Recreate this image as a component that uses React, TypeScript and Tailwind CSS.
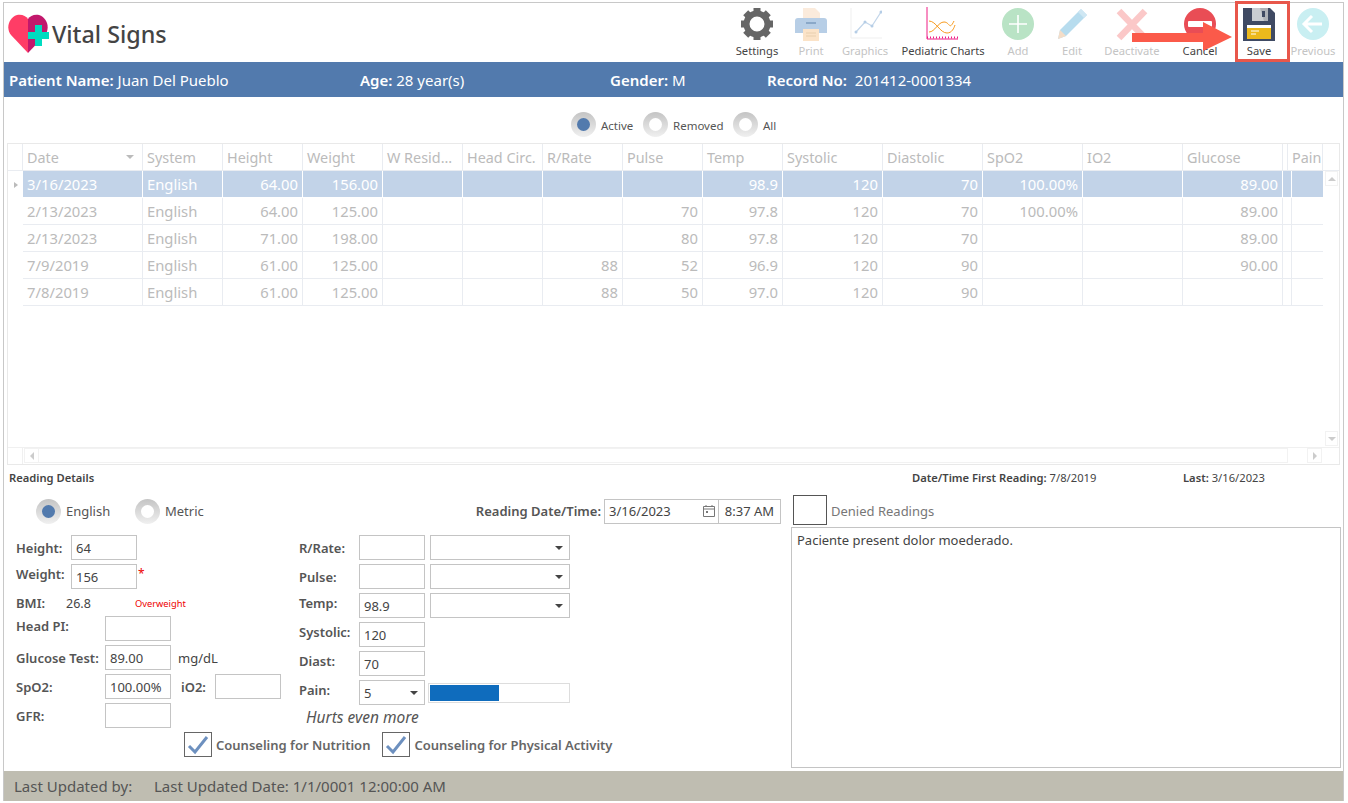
const COLS = 'grid grid-cols-[120px_80px_80px_80px_80px_80px_80px_80px_80px_100px_100px_100px_100px_100px_5px_35px]';

const HEADERS = ['Date', 'System', 'Height', 'Weight', 'W Resid...', 'Head Circ.', 'R/Rate', 'Pulse', 'Temp', 'Systolic', 'Diastolic', 'SpO2', 'IO2', 'Glucose', '', 'Pain'];

const ROWS = [
  ['3/16/2023', 'English', '64.00', '156.00', '', '', '', '', '98.9', '120', '70', '100.00%', '', '89.00', '', ''],
  ['2/13/2023', 'English', '64.00', '125.00', '', '', '', '70', '97.8', '120', '70', '100.00%', '', '89.00', '', ''],
  ['2/13/2023', 'English', '71.00', '198.00', '', '', '', '80', '97.8', '120', '70', '', '', '89.00', '', ''],
  ['7/9/2019', 'English', '61.00', '125.00', '', '', '88', '52', '96.9', '120', '90', '', '', '90.00', '', ''],
  ['7/8/2019', 'English', '61.00', '125.00', '', '', '88', '50', '97.0', '120', '90', '', '', '', '', ''],
];

function Gear() {
  return (
    <svg width="34" height="34" viewBox="0 0 34 34">
      {[0, 45, 90, 135, 180, 225, 270, 315].map((a) => (
        <rect key={a} x="13.5" y="1" width="7" height="8" fill="#666" transform={`rotate(${a} 17 17)`} />
      ))}
      <circle cx="17" cy="17" r="10.5" fill="none" stroke="#666" strokeWidth="6" />
    </svg>
  );
}

function Printer() {
  return (
    <svg width="34" height="34" viewBox="0 0 34 34">
      <path d="M9 1h12l5 5v8H9z" fill="#fbebdc" />
      <path d="M4 11h26a3 3 0 0 1 3 3v12H1V14a3 3 0 0 1 3-3z" fill="#b7cee6" />
      <rect x="12" y="15" width="10" height="2" fill="#8aa8c8" />
      <rect x="9" y="22" width="16" height="12" fill="#fbe3c8" />
      <path d="M12 26h10M12 29h10" stroke="#e8cfae" strokeWidth="1" />
    </svg>
  );
}

function Graphics() {
  return (
    <svg width="34" height="34" viewBox="0 0 34 34">
      <path d="M3 1v30h31" fill="none" stroke="#efefef" strokeWidth="1" />
      <path d="M8 25l9-10 7 4 9-14" fill="none" stroke="#c3d6ea" strokeWidth="1.3" />
      <circle cx="8" cy="25" r="1.5" fill="#b5cde6" />
      <circle cx="17" cy="15" r="1.5" fill="#b5cde6" />
      <circle cx="24" cy="19" r="1.5" fill="#b5cde6" />
      <circle cx="33" cy="5" r="1.5" fill="#b5cde6" />
    </svg>
  );
}

function PediatricIcon() {
  return (
    <svg width="34" height="34" viewBox="0 0 34 34">
      <path d="M1 0v32h31" fill="none" stroke="#ee1c84" strokeWidth="1" />
      <path d="M1 30.5h31" fill="none" stroke="#ee1c84" strokeWidth="2" strokeDasharray="1 2" />
      <path d="M3 14c7 0 11 12 18 12 5 0 7-5 8-8" fill="none" stroke="#f89a1c" strokeWidth="1" />
      <path d="M3 25c6 0 9-10 15-10 6 0 5 9 10-1" fill="none" stroke="#f89a1c" strokeWidth="1" />
    </svg>
  );
}

function AddIcon() {
  return (
    <svg width="34" height="34" viewBox="0 0 34 34">
      <circle cx="17" cy="17" r="16" fill="#b9e3c5" />
      <path d="M17 8v18M8 17h18" stroke="#fff" strokeWidth="1.6" />
    </svg>
  );
}

function EditIcon() {
  return (
    <svg width="34" height="34" viewBox="0 0 34 34">
      <path d="M26 2l6 6L11 29 3 32l2-9z" fill="#b7dcee" />
      <path d="M5 23l6 6-8 3z" fill="#f4ddc8" />
      <path d="M26 2l6 6-3 3-6-6z" fill="#cfe7f3" />
    </svg>
  );
}

function DeactivateIcon() {
  return (
    <svg width="34" height="34" viewBox="0 0 34 34">
      <path d="M4 4l26 27M30 4L4 31" stroke="#fbc8c8" strokeWidth="6.5" />
    </svg>
  );
}

function CancelIcon() {
  return (
    <svg width="34" height="34" viewBox="0 0 34 34">
      <circle cx="17" cy="17" r="16" fill="#e94d55" />
      <rect x="5" y="14" width="24" height="6" rx="1" fill="#fff" />
    </svg>
  );
}

function SaveIcon() {
  return (
    <svg width="34" height="34" viewBox="0 0 34 34">
      <path d="M1 1h27l5 5v28H1z" fill="#3f4a63" />
      <path d="M10 1h16v13H10z" fill="#c9cdd2" />
      <path d="M18 1h8v13h-4z" fill="#aeb2b8" />
      <rect x="20" y="4" width="3" height="6" fill="#3f4a63" />
      <rect x="5" y="18" width="24" height="3" fill="#fff" />
      <rect x="5" y="21" width="24" height="11" fill="#ecb91c" />
      <path d="M9 24h8M9 27h5" stroke="#fff" strokeWidth="1" />
    </svg>
  );
}

function PreviousIcon() {
  return (
    <svg width="34" height="34" viewBox="0 0 34 34">
      <circle cx="17" cy="17" r="16" fill="#c9eff2" />
      <path d="M26 17H9M16 9l-8 8 8 8" fill="none" stroke="#fff" strokeWidth="3" />
    </svg>
  );
}

const TOOLS = [
  { label: 'Settings', w: 'w-[58px]', on: true, icon: <Gear /> },
  { label: 'Print', w: 'w-[50px]', on: false, icon: <Printer /> },
  { label: 'Graphics', w: 'w-[58px]', on: false, icon: <Graphics /> },
  { label: 'Pediatric Charts', w: 'w-[98px]', on: true, icon: <PediatricIcon /> },
  { label: 'Add', w: 'w-[52px]', on: false, icon: <AddIcon /> },
  { label: 'Edit', w: 'w-[56px]', on: false, icon: <EditIcon /> },
  { label: 'Deactivate', w: 'w-[64px]', on: false, icon: <DeactivateIcon /> },
  { label: 'Cancel', w: 'w-[72px]', on: true, icon: <CancelIcon /> },
  { label: 'Save', w: 'w-[46px]', on: true, icon: <SaveIcon /> },
  { label: 'Previous', w: 'w-[62px]', on: false, icon: <PreviousIcon /> },
];

function Logo() {
  return (
    <svg width="41" height="40" viewBox="0 0 41 40" className="shrink-0">
      <path d="M20 39L3 21C-2 15 0 4 9 1c5-1 9 1 11 4z" fill="#ff3d66" />
      <path d="M20 39l17-18c5-6 3-17-6-20-5-1-9 1-11 4z" fill="#c2186c" />
      <path d="M27 11h7v7h7v7h-7v7h-7v-7h-7v-7h7z" fill="#00dcc0" />
    </svg>
  );
}

function Radio({ checked, label, labelClass }: { checked?: boolean; label: string; labelClass: string }) {
  return (
    <div className="flex items-center gap-[5px]">
      <div className="flex h-[25px] w-[25px] items-center justify-center rounded-full bg-gradient-to-b from-[#c4c4c4] to-[#f0f0f0]">
        <div className={`h-[13px] w-[13px] rounded-full ${checked ? 'bg-[#527aad]' : 'bg-white'}`} />
      </div>
      <span className={`${labelClass} pt-[2px] text-[#555]`}>{label}</span>
    </div>
  );
}

function Box({ value, className = 'w-[66px]' }: { value?: string; className?: string }) {
  return (
    <div className={`flex h-[25px] shrink-0 items-center border border-[#c4c4c4] pl-[4px] pt-[2px] text-[13px] text-[#444] ${className}`}>
      {value}
    </div>
  );
}

function Caret() {
  return <div className="h-0 w-0 border-x-[4px] border-t-[4px] border-x-transparent border-t-[#444]" />;
}

function Select({ value, className = 'w-[140px]' }: { value?: string; className?: string }) {
  return (
    <div className={`flex h-[25px] shrink-0 items-center justify-between border border-[#c4c4c4] pl-[4px] pr-[6px] text-[13px] text-[#444] ${className}`}>
      <span className="pt-[2px]">{value}</span>
      <Caret />
    </div>
  );
}

function Label({ children, className }: { children: string; className: string }) {
  return <span className={`shrink-0 translate-y-[1px] text-[13px] font-semibold text-[#555] ${className}`}>{children}</span>;
}

function Check({ label }: { label: string }) {
  return (
    <div className="flex items-center gap-[4px]">
      <div className="flex h-[25px] w-[28px] items-center justify-center border border-[#666]">
        <svg width="22" height="20" viewBox="0 0 22 20">
          <path d="M2 11l6 6L20 2" fill="none" stroke="#6d90bf" strokeWidth="3" />
        </svg>
      </div>
      <span className="pt-[3px] text-[13px] font-semibold text-[#666]">{label}</span>
    </div>
  );
}

function VitalsGrid() {
  return (
    <div className="mx-[3px] flex h-[322px] flex-col border border-[#e9e9e9]">
      <div className="flex h-[27px] shrink-0 border-b border-[#e9ecf1] text-[14.4px] text-[#bbb]">
        <div className="w-[15px] shrink-0 border-r border-[#e9ecf1]" />
        <div className={COLS}>
          {HEADERS.map((h, i) => (
            <div key={i} className="relative flex items-center overflow-hidden whitespace-nowrap border-r border-[#e9ecf1] pl-[4px] pt-[2px]">
              {h}
              {i === 0 && (
                <div className="absolute right-[8px] top-[11px] h-0 w-0 border-x-[4px] border-t-[4px] border-x-transparent border-t-[#bbb]" />
              )}
            </div>
          ))}
        </div>
      </div>
      <div className="flex min-h-0 flex-1 text-[14.8px]">
        <div className="flex w-[15px] shrink-0 flex-col">
          <div className="flex h-[27px] items-center justify-center">
            <div className="h-0 w-0 border-y-[3.5px] border-l-[4px] border-y-transparent border-l-[#bbb]" />
          </div>
        </div>
        <div>
          {ROWS.map((row, r) => (
            <div key={r} className={`${COLS} h-[27px] ${r === 0 ? 'bg-[#c2d3e8] text-white' : 'text-[#bbb]'}`}>
              {row.map((c, i) => (
                <div
                  key={i}
                  className={`flex items-center overflow-hidden pl-[4px] ${i < 15 ? 'border-r' : ''} ${i > 1 ? 'justify-end pr-[4px]' : ''} ${r === 0 ? 'border-b border-r-white border-b-white' : 'border-b border-[#e9ecf1]'}`}
                >
                  {c}
                </div>
              ))}
            </div>
          ))}
        </div>
        <div className="ml-[1px] flex flex-1 flex-col justify-between px-[1px] pb-[1px]">
          <div className="flex h-[15px] items-center justify-center border border-[#f2f2f2]">
            <div className="h-0 w-0 border-x-[4px] border-b-[4px] border-x-transparent border-b-[#ccc]" />
          </div>
          <div className="flex h-[15px] items-center justify-center border border-[#f2f2f2]">
            <div className="h-0 w-0 border-x-[4px] border-t-[4px] border-x-transparent border-t-[#ccc]" />
          </div>
        </div>
      </div>
      <div className="flex h-[17px] shrink-0 border-t border-[#f0f0f0]">
        <div className="w-[15px] shrink-0 border-r border-[#f0f0f0]" />
        <div className="ml-[1px] flex h-[15px] w-[1264px] items-center border border-[#f2f2f2]">
          <div className="flex h-full w-[14px] items-center justify-center border-r border-[#f2f2f2]">
            <div className="h-0 w-0 border-y-[4px] border-r-[4px] border-y-transparent border-r-[#ccc]" />
          </div>
        </div>
        <div className="ml-[19px] flex h-[15px] w-[15px] items-center justify-center border border-[#f2f2f2]">
          <div className="h-0 w-0 border-y-[4px] border-l-[4px] border-y-transparent border-l-[#ccc]" />
        </div>
      </div>
    </div>
  );
}

function LeftFields() {
  return (
    <div className="flex w-[295px] shrink-0 flex-col pl-[12px]">
      <div className="flex h-[25px] items-center">
        <Label className="w-[55px]">Height:</Label>
        <Box value="64" />
      </div>
      <div className="mt-[4px] flex h-[25px] items-start">
        <Label className="w-[55px]">Weight:</Label>
        <Box value="156" />
        <span className="ml-[1px] mt-[1px] text-[12px] text-[#e00]">*</span>
      </div>
      <div className="flex h-[27px] items-center pt-[3px]">
        <span className="w-[50px] text-[13px] font-semibold text-[#555]">BMI:</span>
        <span className="w-[69px] text-[12.5px] text-[#444]">26.8</span>
        <span className="text-[9.3px] text-[#e00]">Overweight</span>
      </div>
      <div className="flex h-[25px] items-start">
        <Label className="w-[89px]">Head PI:</Label>
        <Box />
      </div>
      <div className="mt-[4px] flex h-[25px] items-center">
        <Label className="w-[89px]">Glucose Test:</Label>
        <Box value="89.00" />
        <span className="ml-[7px] pt-[2px] text-[13px] text-[#444]">mg/dL</span>
      </div>
      <div className="mt-[4px] flex h-[25px] items-center">
        <Label className="w-[89px]">SpO2:</Label>
        <Box value="100.00%" />
        <Label className="ml-[10px] w-[34px]">iO2:</Label>
        <Box />
      </div>
      <div className="mt-[4px] flex h-[25px] items-center">
        <Label className="w-[89px]">GFR:</Label>
        <Box />
      </div>
    </div>
  );
}

function MiddleFields() {
  return (
    <div className="flex flex-col gap-[4px]">
      {['R/Rate:', 'Pulse:'].map((l) => (
        <div key={l} className="flex h-[25px] items-center">
          <Label className="w-[60px]">{l}</Label>
          <Box />
          <Select className="ml-[5px] w-[140px]" />
        </div>
      ))}
      <div className="flex h-[25px] items-start">
        <Label className="w-[60px]">Temp:</Label>
        <Box value="98.9" />
        <Select className="ml-[5px] w-[140px]" />
      </div>
      <div className="flex h-[25px] items-start">
        <Label className="w-[60px]">Systolic:</Label>
        <Box value="120" />
      </div>
      <div className="flex h-[25px] items-start">
        <Label className="w-[60px]">Diast:</Label>
        <Box value="70" />
      </div>
      <div className="flex h-[25px] items-start">
        <Label className="w-[60px]">Pain:</Label>
        <Select value="5" className="w-[66px]" />
        <div className="ml-[3px] mt-[3px] h-[20px] w-[142px] border border-[#ddd] p-[1px]">
          <div className="h-full w-[69px] bg-[#0f6cbd]" />
        </div>
      </div>
      <div className="ml-[7px] mt-[-3px] text-[15.5px] italic text-[#555]">Hurts even more</div>
    </div>
  );
}

export default function App() {
  return (
    <div className="relative h-[803px] w-[1348px] bg-white pl-[3px] pt-[2px] font-['Noto_Sans',sans-serif]">
      <div className="flex h-[799px] w-[1341px] flex-col border border-[#c8c8c8] border-b-0">
        <header className="flex h-[59px] shrink-0">
          <div className="flex items-center pl-[4px] pt-[3px]">
            <Logo />
            <h1 className="ml-[3px] text-[23.3px] font-medium text-[#444]">Vital Signs</h1>
          </div>
          <div className="-mr-[1px] ml-auto flex">
            {TOOLS.map((t) => (
              <div key={t.label} className={`flex flex-col items-center pt-[4px] ${t.w}`}>
                <div className="h-[34px] w-[34px]">{t.icon}</div>
                <span className={`mt-[2px] whitespace-nowrap text-[11.2px] ${t.on ? 'text-[#444]' : 'text-[#c4c4c4]'}`}>{t.label}</span>
              </div>
            ))}
          </div>
        </header>

        <div className="flex h-[35px] shrink-0 items-center bg-[#527aad] pl-[5px] pt-[1px] text-[15px] text-white">
          <div className="w-[351px]"><b className="font-semibold">Patient Name:</b> Juan Del Pueblo</div>
          <div className="w-[250px]"><b className="font-semibold">Age:</b> 28 year(s)</div>
          <div className="w-[157px]"><b className="font-semibold">Gender:</b> M</div>
          <div><b className="font-semibold">Record No:</b>&nbsp; 201412-0001334</div>
        </div>

        <div className="flex h-[46px] shrink-0 items-center pl-[567px] pt-[9px]">
          <div className="w-[72px]"><Radio checked label="Active" labelClass="text-[11.5px]" /></div>
          <div className="w-[90px]"><Radio label="Removed" labelClass="text-[11.5px]" /></div>
          <Radio label="All" labelClass="text-[11.5px]" />
        </div>

        <VitalsGrid />

        <div className="flex h-[26px] shrink-0 items-center text-[11.2px] text-[#444]">
          <span className="ml-[5px] w-[903px] font-semibold">Reading Details</span>
          <span className="w-[271px]"><b className="font-semibold">Date/Time First Reading:</b> 7/8/2019</span>
          <span><b className="font-semibold">Last:</b> 3/16/2023</span>
        </div>

        <div className="flex min-h-0 flex-1">
          <div className="mt-[6px] flex w-[787px] shrink-0 flex-col">
            <div className="flex h-[28px] items-center">
              <div className="ml-[32px] w-[99px]"><Radio checked label="English" labelClass="text-[13px]" /></div>
              <Radio label="Metric" labelClass="text-[13px]" />
              <span className="ml-auto mr-[3px] pt-[2px] text-[13px] font-semibold text-[#555]">Reading Date/Time:</span>
              <div className="flex h-[25px] w-[115px] items-center justify-between border border-[#c4c4c4] pl-[4px] pr-[2px] text-[13px] text-[#444]">
                <span className="pt-[2px]">3/16/2023</span>
                <svg width="14" height="14" viewBox="0 0 14 14">
                  <path d="M1.5 2.5h11v10h-11zM1.5 5h11M4 1v2M10 1v2" fill="none" stroke="#777" />
                  <rect x="4" y="7" width="2" height="2" fill="#777" />
                </svg>
              </div>
              <div className="mr-[10px] flex h-[25px] w-[62px] items-center justify-center border border-l-0 border-[#c4c4c4] pt-[2px] text-[13px] text-[#444]">8:37 AM</div>
            </div>
            <div className="mt-[10px] flex h-[197px]">
              <LeftFields />
              <MiddleFields />
            </div>
            <div className="flex gap-[12px] pl-[180px]">
              <Check label="Counseling for Nutrition" />
              <Check label="Counseling for Physical Activity" />
            </div>
          </div>

          <div className="flex w-[550px] shrink-0 flex-col pb-[2px]">
            <div className="flex h-[36px] items-start pl-[2px] pt-[4px]">
              <div className="h-[30px] w-[34px] border border-[#555]" />
              <span className="ml-[4px] mt-[7px] text-[13px] text-[#777]">Denied Readings</span>
            </div>
            <div className="flex-1 border border-[#c4c4c4] px-[5px] py-[3px] text-[13px] text-[#444]">Paciente present dolor moederado.</div>
          </div>
        </div>

        <footer className="mt-[1px] flex h-[30px] shrink-0 items-center bg-[#bfbdb1] pl-[10px] text-[15px] text-[#555]">
          <span className="w-[140px]">Last Updated by:</span>
          <span>Last Updated Date: 1/1/0001 12:00:00 AM</span>
        </footer>
      </div>

      <div className="absolute left-[1235px] top-[1px] h-[61px] w-[55px] border-[3px] border-[#e8574b]" />
      <svg width="104" height="32" viewBox="0 0 104 32" className="absolute left-[1131px] top-[21px]">
        <path d="M1 12h71V1l29 15-29 14V21H1z" fill="#fb5a4a" />
      </svg>
    </div>
  );
}
